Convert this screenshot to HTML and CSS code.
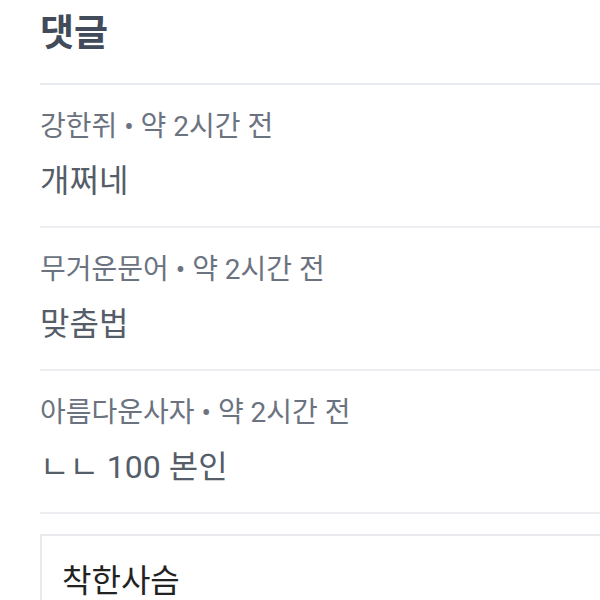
FILE: index.html
```html
<!DOCTYPE html>
<html lang="ko">
<head>
<meta charset="utf-8">
<link rel="stylesheet" href="styles.css">
</head>
<body>
<div class="page">
  <h2 class="title">댓글</h2>
  <ul class="comments">
    <li class="comment">
      <div class="meta">강한쥐 • 약 2시간 전</div>
      <div class="text">개쩌네</div>
    </li>
    <li class="comment">
      <div class="meta">무거운문어 • 약 2시간 전</div>
      <div class="text">맞춤법</div>
    </li>
    <li class="comment">
      <div class="meta">아름다운사자 • 약 2시간 전</div>
      <div class="text">ㄴㄴ 100 본인</div>
    </li>
  </ul>
  <div class="compose">
    <div class="author">착한사슴</div>
  </div>
</div>
</body>
</html>
```
FILE: styles.css
```css
html, body {
  margin: 0;
  padding: 0;
  background: #ffffff;
  overflow: hidden;
  height: 600px;
}
.page {
  padding-left: 40px;
  font-family: Roboto, "Noto Sans CJK KR", sans-serif;
}
.title {
  margin: 0;
  padding-top: 10px;
  height: 48px;
  line-height: 48px;
  font-size: 37px;
  font-weight: 700;
  color: #414b59;
  padding-bottom: 25px;
  border-bottom: 2px solid #e7eaee;
}
.comments {
  list-style: none;
  margin: 0;
  padding: 0;
}
.comment {
  padding: 26px 0 25px 0;
  border-bottom: 2px solid #eceef2;
  display: flex;
  flex-direction: column;
  gap: 18px;
}
.meta {
  font-size: 28px;
  line-height: 32px;
  color: #6b7380;
}
.text {
  font-size: 32px;
  line-height: 40px;
  color: #555d69;
}
.compose {
  margin-top: 20px;
  margin-right: -20px;
  border: 2px solid #e9eaee;
  border-bottom: none;
  padding: 25px 20px 0 20px;
  height: 60px;
}
.author {
  font-size: 32px;
  line-height: 40px;
  color: #222222;
}
```
